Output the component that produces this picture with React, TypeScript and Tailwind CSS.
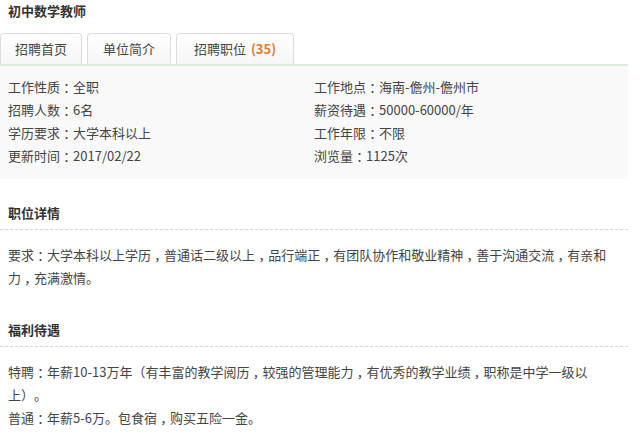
import React from "react";

const font = { fontFamily: '"Noto Sans CJK SC", "Noto Sans", sans-serif' };

function T({ s }: { s: string }) {
  const parts = s.split(/(.[：，])/);
  return (
    <>
      {parts.map((p, i) =>
        p.length === 2 && (p[1] === "：" || p[1] === "，") ? (
          <span key={i} className="whitespace-nowrap">
            {p[0]}
            <span className="px-[0.25em] [font-feature-settings:'halt']">{p[1]}</span>
          </span>
        ) : (
          <React.Fragment key={i}>{p}</React.Fragment>
        )
      )}
    </>
  );
}

export default function App() {
  const left = ["工作性质：全职", "招聘人数：6名", "学历要求：大学本科以上", "更新时间：2017/02/22"];
  const right = ["工作地点：海南-儋州-儋州市", "薪资待遇：50000-60000/年", "工作年限：不限", "浏览量：1125次"];
  return (
    <div className="w-[640px] h-[442px] bg-white text-[#444] text-[13px] overflow-hidden [text-spacing-trim:space-all]" style={font}>
      <div className="w-[628px]">
        <div className="h-[33px] pl-[8px] pt-[2px] leading-[18px] font-bold text-[#333]">初中数学教师</div>
        <div className="flex gap-[5px] h-[31px]">
          <div className="w-[82px] border border-b-0 border-[#dcdcdc] rounded-t-[4px] bg-gradient-to-b from-white to-[#f6f6f6] flex items-center justify-center text-[#444]">招聘首页</div>
          <div className="w-[84px] border border-b-0 border-[#dcdcdc] rounded-t-[4px] bg-gradient-to-b from-white to-[#f6f6f6] flex items-center justify-center text-[#444]">单位简介</div>
          <div className="w-[118px] border border-b-0 border-[#dcdcdc] rounded-t-[4px] bg-gradient-to-b from-white to-[#f6f6f6] flex items-center justify-center text-[#444]">
            招聘职位<span className="ml-[5px] font-bold text-[#e47a2e]">(35)</span>
          </div>
        </div>
        <div className="h-[2px] bg-[#dcefdc]" />
        <div className="bg-[#f9f9f9] pt-[9px] pb-[12px] pl-[8px] grid grid-cols-[306px_1fr] leading-[23px]">
          <div>
            {left.map((t) => (
              <div key={t}>
                <T s={t} />
              </div>
            ))}
          </div>
          <div>
            {right.map((t) => (
              <div key={t}>
                <T s={t} />
              </div>
            ))}
          </div>
        </div>
        <div className="mt-[24px] pl-[8px] leading-[20px] font-bold text-[#333]">职位详情</div>
        <div className="mt-[6px] border-t border-dashed border-[#d4d4d4]" />
        <div className="mt-[13px] pl-[8px] pr-[4px] leading-[23px]">
          <T s="要求：大学本科以上学历，普通话二级以上，品行端正，有团队协作和敬业精神，善于沟通交流，有亲和力，充满激情。" />
        </div>
        <div className="mt-[31px] pl-[8px] leading-[20px] font-bold text-[#333]">福利待遇</div>
        <div className="mt-[6px] border-t border-dashed border-[#d4d4d4]" />
        <div className="mt-[13px] pl-[8px] pr-[10px] leading-[23px]">
          <div>
            <T s="特聘：年薪10-13万年（有丰富的教学阅历，较强的管理能力，有优秀的教学业绩，职称是中学一级以上）。" />
          </div>
          <div>
            <T s="普通：年薪5-6万。包食宿，购买五险一金。" />
          </div>
        </div>
      </div>
    </div>
  );
}
